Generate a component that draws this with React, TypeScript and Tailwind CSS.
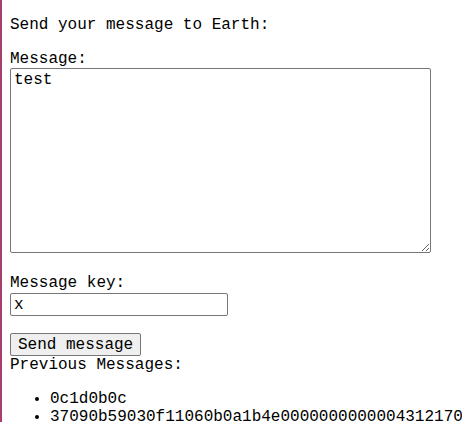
import { useState } from 'react';

const mono = { fontFamily: '"Liberation Mono", "DejaVu Sans Mono", monospace' };

export default function App() {
  const [message, setMessage] = useState('test');
  const [key, setKey] = useState('x');
  const previous = ['0c1d0b0c', '37090b59030f11060b0a1b4e0000000000004312170'];

  return (
    <div
      className="min-h-[422px] w-[462px] overflow-hidden border-l-2 border-[#a63f6e] bg-white pl-2 text-[16px] leading-[18px] text-black"
      style={mono}
    >
      <p className="pt-4">Send your message to Earth:</p>

      <form onSubmit={(e) => e.preventDefault()}>
        <label htmlFor="message" className="mt-4 block">
          Message:
        </label>
        <textarea
          id="message"
          value={message}
          onChange={(e) => setMessage(e.target.value)}
          className="block h-[185px] w-[421px] resize rounded-[2px] border border-[#767676] px-[3px] py-[2px] text-[16px] leading-[18px] outline-none"
          style={mono}
        />

        <label htmlFor="key" className="mt-[21px] block">
          Message key:
        </label>
        <input
          id="key"
          type="text"
          value={key}
          onChange={(e) => setKey(e.target.value)}
          className="mt-px block h-[23px] w-[218px] rounded-[2px] border border-[#767676] px-[3px] text-[16px] leading-[18px] outline-none"
          style={mono}
        />

        <button
          type="submit"
          className="mt-[17px] block h-[23px] rounded-[2px] border border-[#767676] bg-[#efefef] px-[7px] text-[16px] leading-[18px]"
          style={mono}
        >
          Send message
        </button>
      </form>

      <p>Previous Messages:</p>
      <ul className="mt-4 list-disc pl-10">
        {previous.map((m) => (
          <li key={m} className="whitespace-nowrap">
            {m}
          </li>
        ))}
      </ul>
    </div>
  );
}
